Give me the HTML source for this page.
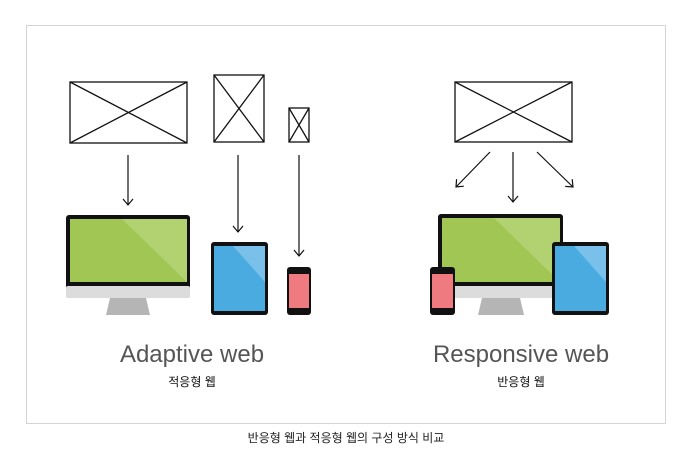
<!DOCTYPE html>
<html><head><meta charset="utf-8"><style>
html,body{margin:0;padding:0;background:#fff;width:696px;height:462px;overflow:hidden}
svg{position:absolute;left:0;top:0}
.t{font-family:"Liberation Sans","Noto Sans CJK KR",sans-serif}
</style></head><body>
<svg width="696" height="462" viewBox="0 0 696 462" xmlns="http://www.w3.org/2000/svg">
<defs>
<marker id="a" markerWidth="12" markerHeight="12" refX="10" refY="6" orient="auto" markerUnits="userSpaceOnUse">
<path d="M4,1 L10,6 L4,11" fill="none" stroke="#111" stroke-width="1.2"/></marker>
</defs>
<rect x="26.5" y="25.5" width="639" height="398" fill="#fff" stroke="#d4d4d4"/>
<g fill="none" stroke="#111" stroke-width="1.3">
<rect x="70" y="82" width="117" height="61"/><path d="M70 82L187 143M187 82L70 143"/>
<rect x="214" y="75" width="50" height="67"/><path d="M214 75L264 142M264 75L214 142"/>
<rect x="289" y="108" width="20" height="34"/><path d="M289 108L309 142M309 108L289 142"/>
<rect x="455" y="82" width="117" height="60"/><path d="M455 82L572 142M572 82L455 142"/>
</g>
<g stroke="#111" stroke-width="1.2" marker-end="url(#a)">
<line x1="128" y1="155" x2="128" y2="205"/>
<line x1="238" y1="155" x2="238" y2="232"/>
<line x1="299" y1="155" x2="299" y2="256"/>
<line x1="513" y1="152" x2="513" y2="202"/>
<line x1="490" y1="152" x2="456" y2="187"/>
<line x1="537" y1="152" x2="573" y2="187"/>
</g>
<!-- adaptive devices -->
<g>
<path d="M110 298h36l4 17h-44z" fill="#b5b5b5"/>
<rect x="66" y="215" width="124" height="83" rx="3" fill="#111"/>
<rect x="66" y="286" width="124" height="12" rx="2" fill="#dcdcdc"/>
<rect x="70" y="219" width="117" height="63" fill="#a1c654"/>
<path d="M122 219h65v63z" fill="#b2d271"/>
<rect x="211" y="242" width="57" height="73" rx="3" fill="#111"/>
<rect x="214" y="246" width="51" height="65" fill="#4aabe0"/>
<path d="M233 246h32v36z" fill="#79c0ea"/>
<rect x="287" y="267" width="24" height="48" rx="3" fill="#111"/>
<rect x="289" y="274" width="20" height="34" fill="#ef7a80"/>
</g>
<!-- responsive devices -->
<g>
<path d="M482 298h38l4 17h-46z" fill="#b5b5b5"/>
<rect x="438" y="214" width="125" height="84" rx="3" fill="#111"/>
<rect x="438" y="286" width="125" height="12" rx="2" fill="#dcdcdc"/>
<rect x="442" y="218" width="118" height="64" fill="#a1c654"/>
<path d="M494 218h66v64z" fill="#b2d271"/>
<rect x="552" y="242" width="57" height="73" rx="3" fill="#111"/>
<rect x="555" y="246" width="51" height="65" fill="#4aabe0"/>
<path d="M574 246h32v36z" fill="#79c0ea"/>
<rect x="430" y="267" width="25" height="48" rx="3" fill="#111"/>
<rect x="432" y="274" width="21" height="34" fill="#ef7a80"/>
</g>
<g class="t" text-anchor="middle">
<text x="192" y="362" font-size="24" fill="#555">Adaptive web</text>
<text x="192" y="386" font-size="12" fill="#111">적응형 웹</text>
<text x="521" y="362" font-size="24" fill="#555">Responsive web</text>
<text x="521" y="386" font-size="12" fill="#111">반응형 웹</text>
<text x="346" y="442" font-size="12" fill="#222">반응형 웹과 적응형 웹의 구성 방식 비교</text>
</g>
</svg>
</body></html>
